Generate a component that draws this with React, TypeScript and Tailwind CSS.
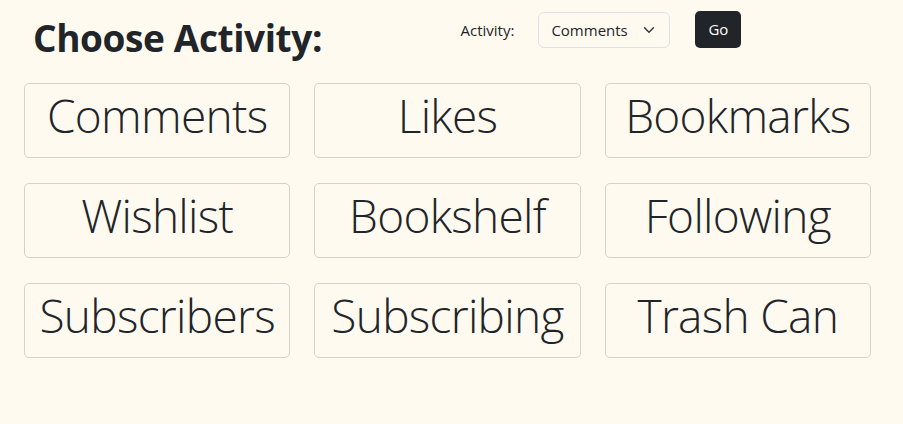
import React from 'react';
import { ChevronDown } from 'lucide-react';

const activities: string[] = [
    'Comments', 'Likes', 'Bookmarks',
    'Wishlist', 'Bookshelf', 'Following',
    'Subscribers', 'Subscribing', 'Trash Can',
];

const ActivityCard: React.FC<{ name: string }> = ({ name }) => (
    <div className="h-[75px] border border-[#d4d2cc] rounded-[5px] flex items-center justify-center text-[46px] font-light text-[#212529] leading-none">
        <span className="-mt-[11px] tracking-[-0.7px]">{name}</span>
    </div>
);

const App: React.FC = () => {
    return (
        <div
            className="w-[903px] h-[424px] bg-[#fffaf0] px-6 text-[#212529]"
            style={{ fontFamily: '"Open Sans", "Noto Sans", sans-serif' }}
        >
            <div className="grid grid-cols-2 h-[83px] items-start">
                <h1 className="pl-[9px] pt-[15px] text-[37px] font-bold leading-tight tracking-[-0.4px]">Choose Activity:</h1>
                <div className="flex items-center pl-[9px] pt-[12px]">
                    <label className="text-[15px] mr-[24px]">Activity:</label>
                    <div className="w-[132px] h-[36px] border border-[#dee2e6] rounded-[6px] bg-[#fffaf0] flex items-center justify-between pl-3 pr-[11px] text-[15px]">
                        <span>Comments</span>
                        <ChevronDown size={18} strokeWidth={2} className="text-[#343a40]" />
                    </div>
                    <button className="ml-[25px] h-[37px] w-[46px] rounded-[5px] bg-[#212529] text-white text-[15px] -mt-[1px]">Go</button>
                </div>
            </div>
            <div className="grid grid-cols-3 gap-x-6 gap-y-[25px] pr-[8px]">
                {activities.map(a => <ActivityCard key={a} name={a} />)}
            </div>
        </div>
    );
};

export default App;
